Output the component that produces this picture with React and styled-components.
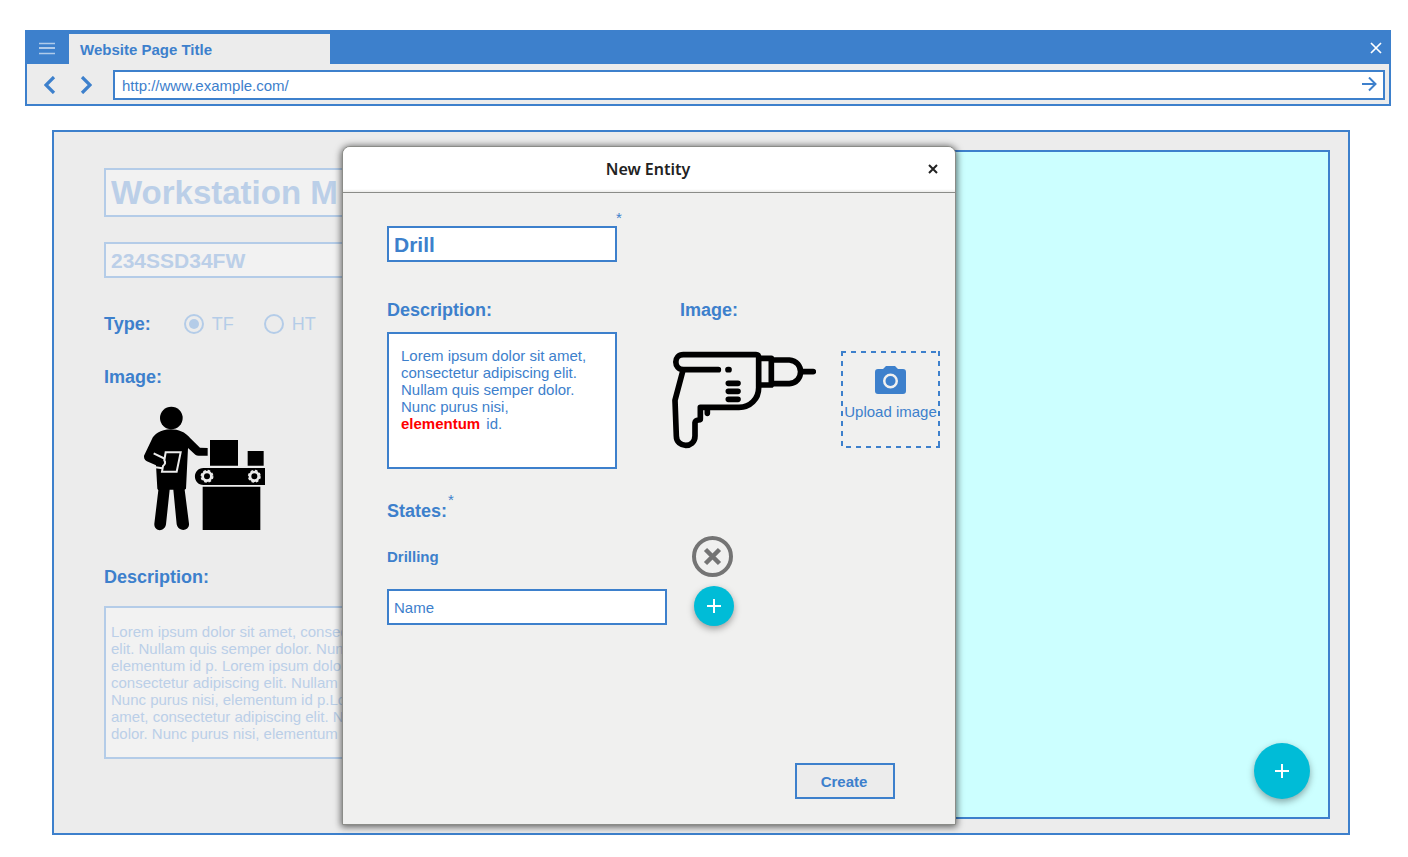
import React from "react";
import styled, { createGlobalStyle, css } from "styled-components";

const blue = "#3d80cc";
const surface = "#ececec";
const teal = "#00bcd7";

const GlobalStyle = createGlobalStyle`
  * { box-sizing: border-box; }
  body {
    margin: 0;
    background: #fff;
    color: ${blue};
    font: 15px/17px "Liberation Sans", Arial, sans-serif;
  }
  button, input, textarea { font: inherit; color: inherit; margin: 0; }
  button { padding: 0; border: 0; background: none; cursor: pointer; }
  svg { display: block; }
`;

const Page = styled.div`
  padding: 30px 17px 22px 25px;
`;

/* Browser chrome */
const Browser = styled.header`
  border: 2px solid ${blue};
  background: ${surface};
`;

const TabBar = styled.div`
  display: flex;
  align-items: stretch;
  height: 32px;
  background: ${blue};
`;

const MenuButton = styled.button`
  display: grid;
  place-items: center;
  width: 42px;
  padding-right: 2px;
`;

const Tab = styled.div`
  width: 261px;
  margin-top: 2px;
  padding: 7px 11px;
  background: ${surface};
  font-weight: bold;
`;

const CloseTab = styled.button`
  margin-left: auto;
  padding: 0 7px;
`;

const Toolbar = styled.div`
  display: flex;
  align-items: center;
  padding: 6px 4px 4px 14px;
`;

const NavButton = styled.button`
  display: grid;
  place-items: center;
  width: 18px;
  height: 30px;
  margin-right: 18px;
`;

const AddressBar = styled.form`
  display: flex;
  flex: 1;
  align-items: center;
  height: 30px;
  padding: 0 6px 0 7px;
  border: 2px solid ${blue};
  background: #fff;
`;

const AddressInput = styled.input`
  flex: 1;
  min-width: 0;
  padding: 0;
  border: 0;
  outline: 0;
  background: none;
`;

/* Workstation page */
const Workspace = styled.main`
  position: relative;
  display: grid;
  grid-template-columns: 1fr 1fr;
  margin: 24px 41px 0 27px;
  padding: 18px 18px 14px 50px;
  border: 2px solid ${blue};
  background: ${surface};
`;

const Details = styled.section`
  display: flex;
  flex-direction: column;
  align-items: flex-start;
  padding: 18px 0 60px;
`;

const Canvas = styled.section`
  display: flex;
  align-items: flex-end;
  justify-content: flex-end;
  padding: 18px;
  border: 2px solid ${blue};
  background: #ccffff;
`;

const fieldBox = css`
  display: block;
  padding: 0 5px;
  border: 2px solid ${(p) => (p.$dimmed ? "#b4cce8" : blue)};
  border-radius: 0;
  outline: 0;
  background: ${(p) => (p.$dimmed ? "#f2f2f2" : "#fff")};
  color: ${(p) => (p.$dimmed ? "#bbcfe8" : blue)};
`;

const sizes = {
  normal: css`height: 36px;`,
  medium: css`height: 36px; padding-top: 2px; font-size: 21px; font-weight: bold;`,
  large: css`height: 49px; font-size: 33px; font-weight: bold;`,
};

const TextInput = styled.input`
  ${fieldBox}
  width: ${(p) => p.$width || "400px"};
  ${(p) => sizes[p.$size || "normal"]}
`;

const LongText = styled.textarea`
  ${fieldBox}
  width: 400px;
  height: 153px;
  padding: 15px 5px;
  resize: none;
  overflow: hidden;
`;

const CodeField = styled.div`
  margin: 25px 0 36px;
`;

const Label = styled.label`
  display: block;
  font-size: 18px;
  line-height: 20px;
  font-weight: bold;
`;

const TypeGroup = styled.div`
  display: flex;
  margin-bottom: 33px;
`;

const RadioLabel = styled.label`
  display: flex;
  align-items: center;
  gap: 8px;
  margin-left: ${(p) => (p.$first ? "33px" : "30px")};
  font-size: 18px;
  line-height: 20px;
  color: #b4cce8;
`;

const Radio = styled.input`
  appearance: none;
  width: 20px;
  height: 20px;
  border: 2px solid #b4cce8;
  border-radius: 50%;
  background: ${surface};
  &:checked {
    padding: 3px;
    background: #b4cce8 content-box;
  }
`;

const StationImage = styled.div`
  padding: 8px 26px 27px;
`;

const DescriptionLabel = styled(Label)`
  margin-bottom: 19px;
`;

const AddButton = styled.button`
  display: grid;
  place-items: center;
  width: ${(p) => p.$size}px;
  height: ${(p) => p.$size}px;
  border-radius: 50%;
  background: ${teal};
  box-shadow: 0 3px 7px rgba(0, 0, 0, 0.35);
`;

/* Dialog */
const Dialog = styled.section`
  position: absolute;
  top: 14px;
  left: 288px;
  width: 614px;
  border: 1px solid #8b8c88;
  border-radius: 8px 8px 0 0;
  background: #f0f0ef;
  box-shadow: 0 1px 7px 1px rgba(0, 0, 0, 0.6);
`;

const DialogHeader = styled.header`
  display: grid;
  grid-template-columns: 44px 1fr 44px;
  align-items: center;
  height: 46px;
  padding-bottom: 2px;
  border-bottom: 1px solid #8b8c88;
  border-radius: 7px 7px 0 0;
  background: linear-gradient(#fff 42px, #ececea);
`;

const DialogTitle = styled.h2`
  grid-column: 2;
  margin: 0;
  padding-right: 2px;
  color: #222;
  font: 600 16px/22px "Noto Sans", "Open Sans", sans-serif;
  text-align: center;
`;

const DialogClose = styled.button`
  display: grid;
  place-items: center;
  height: 42px;
`;

const DialogBody = styled.form`
  padding: 33px 15px 25px 44px;
`;

const Required = styled.span`
  position: absolute;
  left: 100%;
  bottom: 100%;
  margin: 0 0 -7px 1px;
  font-weight: normal;
  font-size: 15px;
  line-height: 17px;
`;

const RequiredField = styled.div`
  position: relative;
  width: max-content;
`;

const NameRequired = styled(Required)`
  margin: 0 0 0 -1px;
`;

const Columns = styled.div`
  display: grid;
  grid-template-columns: 230px 1fr;
  column-gap: 55px;
  margin: 38px 0 32px;
`;

const RichText = styled.div`
  width: 230px;
  height: 137px;
  margin-top: 12px;
  padding: 13px 12px;
  border: 2px solid ${blue};
  outline: 0;
  background: #fff;
`;

const Misspelled = styled.strong`
  margin-right: 2px;
  color: #f00;
`;

const ImageLabel = styled(Label)`
  padding-left: 8px;
`;

const ImageRow = styled.div`
  display: flex;
  justify-content: space-between;
  margin-top: 31px;
`;

const Upload = styled.button`
  width: 99px;
  height: 97px;
  padding-bottom: 14px;
  color: ${blue};
  background: 
    repeating-linear-gradient(90deg, ${blue} 0 5px, transparent 5px 10px) 0 0 / 100% 2px no-repeat,
    repeating-linear-gradient(90deg, transparent 0 5px, ${blue} 5px 10px) 0 100% / 100% 2px no-repeat,
    repeating-linear-gradient(${blue} 0 5px, transparent 5px 10px) 0 0 / 2px 100% no-repeat,
    repeating-linear-gradient(${blue} 0 5px, transparent 5px 10px) 100% 0 / 2px 100% no-repeat;
  white-space: nowrap;
  svg { margin: 0 auto 9px; }
`;

const StateRow = styled.div`
  display: grid;
  grid-template-columns: 280px 42px;
  column-gap: 26px;
  align-items: center;
  justify-items: start;
  margin-top: ${(p) => p.$gap}px;
`;

const StateName = styled.span`
  font-weight: bold;
`;

const RemoveButton = styled.button`
  margin-left: -1px;
`;

const AddCell = styled.div`
  padding: 0 0 2px 1px;
`;

const DialogFooter = styled.footer`
  display: flex;
  justify-content: flex-end;
  padding: 135px 45px 0 0;
`;

const CreateButton = styled.button`
  width: 100px;
  height: 36px;
  padding-right: 2px;
  border: 2px solid ${blue};
  background: ${surface};
  color: ${blue};
  font-weight: bold;
`;

const Plus = () => (
  <svg width="14" height="14" fill="#fff" aria-hidden="true">
    <path d="M6 0h2v6h6v2H8v6H6V8H0V6h6z" />
  </svg>
);

const Worker = () => (
  <svg width="150" height="145" viewBox="0 0 450 435" role="img" aria-label="Worker at a conveyor">
    <circle cx="124" cy="69" r="34" />
    <path d="M122 103C91 103 71 120 66 132L42 182C41 192 47 198 54 200L78 211L82 281L85 286L73 386C71 411 105 412 108 388L119 284H130L140 388C145 412 179 409 177 386L164 284L168 281L174 159L196 179Q200 182 206 182H233V159L210 158L181 130C165 111 146 103 122 103Z" />
    <path d="M71 175L106 192M76 217L98 220" fill="none" stroke="#ececec" strokeWidth="6" />
    <path d="M107 172H152L140 230H96L99 213Q109 205 103 196Z" stroke="#ececec" strokeWidth="6" />
    <path d="M240 135H324V212H240ZM353 168H401V212H353ZM221 219H405V270H221C186 270 186 219 221 219ZM218 275H391V405H218Z" />
    <g fill="none" stroke="#ececec">
      {[231, 373].map((cx) => (
        <g key={cx}>
          <circle cx={cx} cy="244" r="13" strokeWidth="8" />
          <circle cx={cx} cy="244" r="17" strokeWidth="5" strokeDasharray="8 5.35" />
        </g>
      ))}
    </g>
  </svg>
);

const DrillImage = () => (
  <svg width="144" height="99" viewBox="36 33 432 297" role="img" aria-label="Drill">
    <g fill="none" stroke="#000" strokeWidth="17" strokeLinecap="round" strokeLinejoin="round">
      <path d="M175 89H70C40 87 40 44 70 44H288Q296 44 296 54V143C296 177 270 202 237 202H121V237Q121 240 116 240Q106 241 105 248V288C105 326 49 325 49 288L45 181L69 91" />
      <path d="M204 89H207M205 130H234M205 154H234M205 178H234M142 206V220M430 95H460" />
      <path d="M300 55H334V135H300M334 60H388C433 63 433 128 388 131H334" />
    </g>
  </svg>
);

const stationText = [
  "Lorem ipsum dolor sit amet, consectetur adipiscing",
  "elit. Nullam quis semper dolor. Nunc purus nisi,",
  "elementum id p. Lorem ipsum dolor sit amet,",
  "consectetur adipiscing elit. Nullam quis semper dolor.",
  "Nunc purus nisi, elementum id p.Lorem ipsum dolor sit",
  "amet, consectetur adipiscing elit. Nullam quis semper",
  "dolor. Nunc purus nisi, elementum id p.",
].join("\n");

export default function App() {
  return (
    <Page>
      <GlobalStyle />
      <Browser>
        <TabBar>
          <MenuButton aria-label="Menu">
            <svg width="18" height="14" stroke="#b0cbea" aria-hidden="true">
              <path d="M1 2.500h16M1 12.500h16" strokeWidth="1.600" />
              <path d="M1 7h16" strokeWidth="2" />
            </svg>
          </MenuButton>
          <Tab>Website Page Title</Tab>
          <CloseTab aria-label="Close tab">
            <svg width="12" height="12" stroke="#fff" strokeWidth="1.700" aria-hidden="true">
              <path d="M1 1l10 10M11 1L1 11" />
            </svg>
          </CloseTab>
        </TabBar>
        <Toolbar>
          <NavButton aria-label="Back">
            <svg width="12" height="18" fill="none" stroke={blue} strokeWidth="3.200" aria-hidden="true">
              <path d="M10 1L2 9l8 8" />
            </svg>
          </NavButton>
          <NavButton aria-label="Forward">
            <svg width="12" height="18" fill="none" stroke={blue} strokeWidth="3.200" aria-hidden="true">
              <path d="M2 1l8 8-8 8" />
            </svg>
          </NavButton>
          <AddressBar onSubmit={(e) => e.preventDefault()}>
            <AddressInput aria-label="Address" defaultValue="http://www.example.com/" />
            <button aria-label="Go">
              <svg width="16" height="16" fill="none" stroke={blue} strokeWidth="2" aria-hidden="true">
                <path d="M1 7h13.500M8 .5L14.500 7 8 13.500" />
              </svg>
            </button>
          </AddressBar>
        </Toolbar>
      </Browser>

      <Workspace>
        <Details>
          <TextInput aria-label="Workstation name" $size="large" $dimmed defaultValue="Workstation M" />
          <CodeField>
            <TextInput aria-label="Code" $size="medium" $dimmed defaultValue="234SSD34FW" />
          </CodeField>
          <TypeGroup role="radiogroup" aria-labelledby="type-label">
            <Label as="span" id="type-label">Type:</Label>
            <RadioLabel $first>
              <Radio type="radio" name="type" defaultChecked />
              TF
            </RadioLabel>
            <RadioLabel>
              <Radio type="radio" name="type" />
              HT
            </RadioLabel>
          </TypeGroup>
          <Label as="span">Image:</Label>
          <StationImage>
            <Worker />
          </StationImage>
          <DescriptionLabel htmlFor="station-description">Description:</DescriptionLabel>
          <LongText id="station-description" $dimmed spellCheck={false} defaultValue={stationText} />
        </Details>
        <Canvas>
          <AddButton $size={56} aria-label="Add entity">
            <Plus />
          </AddButton>
        </Canvas>

        <Dialog role="dialog" aria-labelledby="dialog-title">
          <DialogHeader>
            <DialogTitle id="dialog-title">New Entity</DialogTitle>
            <DialogClose aria-label="Close">
              <svg width="10" height="10" stroke="#222" strokeWidth="2" aria-hidden="true">
                <path d="M1 1l8 8M9 1L1 9" />
              </svg>
            </DialogClose>
          </DialogHeader>
          <DialogBody onSubmit={(e) => e.preventDefault()}>
            <RequiredField>
              <TextInput aria-label="Entity name" $size="medium" $width="230px" defaultValue="Drill" />
              <NameRequired>*</NameRequired>
            </RequiredField>
            <Columns>
              <div>
                <Label as="span" id="entity-description">Description:</Label>
                <RichText
                  role="textbox"
                  aria-multiline="true"
                  aria-labelledby="entity-description"
                  contentEditable
                  suppressContentEditableWarning
                  spellCheck={false}
                >
                  Lorem ipsum dolor sit amet, consectetur adipiscing elit. Nullam quis semper dolor. Nunc
                  purus nisi, <br />
                  <Misspelled>elementum</Misspelled> id.
                </RichText>
              </div>
              <div>
                <ImageLabel as="span">Image:</ImageLabel>
                <ImageRow>
                  <DrillImage />
                  <Upload type="button">
                    <svg width="31" height="28" viewBox="0 0 31 28" aria-hidden="true">
                      <path
                        fill={blue}
                        fillRule="evenodd"
                        d="M11 0h9l3 3h5q3 0 3 3v19q0 3-3 3H3q-3 0-3-3V6q0-3 3-3h5zM15.500 7.500a7.500 7.500 0 1 0 0 15 7.500 7.500 0 0 0 0-15z"
                      />
                      <circle cx="15.500" cy="15" r="5" fill={blue} />
                    </svg>
                    Upload image
                  </Upload>
                </ImageRow>
              </div>
            </Columns>
            <RequiredField>
              <Label as="span">States:</Label>
              <Required>*</Required>
            </RequiredField>
            <StateRow $gap={15}>
              <StateName>Drilling</StateName>
              <RemoveButton type="button" aria-label="Remove Drilling">
                <svg width="41" height="41" fill="none" stroke="#747474" aria-hidden="true">
                  <circle cx="20.500" cy="20.500" r="18.500" strokeWidth="4" />
                  <path d="M13.500 13.500l14 14M27.500 13.500l-14 14" strokeWidth="4.500" />
                </svg>
              </RemoveButton>
            </StateRow>
            <StateRow $gap={9}>
              <TextInput aria-label="State name" $width="280px" defaultValue="Name" />
              <AddCell>
                <AddButton type="button" $size={40} aria-label="Add state">
                  <Plus />
                </AddButton>
              </AddCell>
            </StateRow>
            <DialogFooter>
              <CreateButton>Create</CreateButton>
            </DialogFooter>
          </DialogBody>
        </Dialog>
      </Workspace>
    </Page>
  );
}
